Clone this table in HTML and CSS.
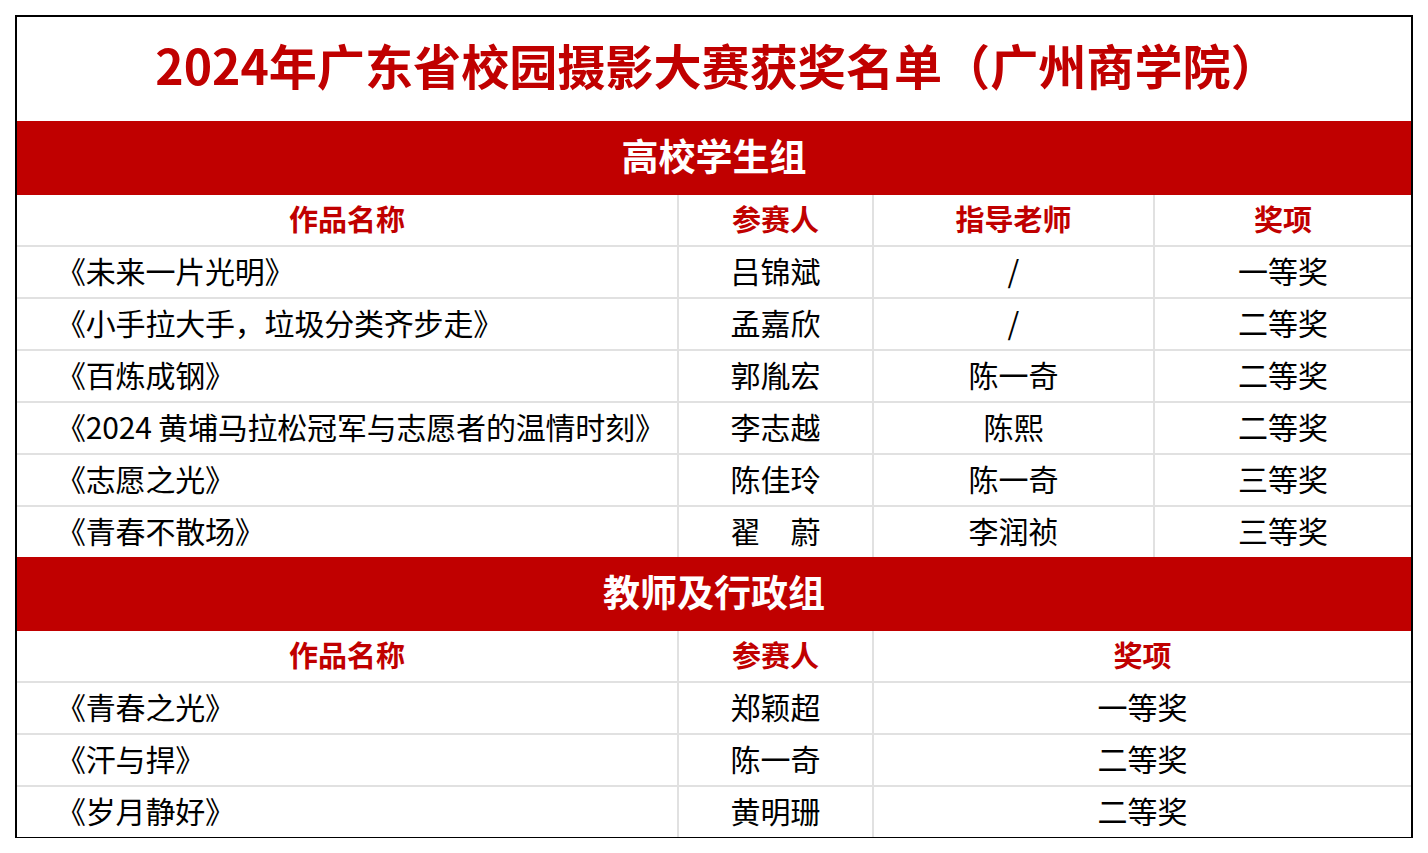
FILE: index.html
```html
<!DOCTYPE html>
<html lang="zh-CN">
<head>
<meta charset="utf-8">
<title>2024年广东省校园摄影大赛获奖名单（广州商学院）</title>
<link rel="stylesheet" href="styles.css">
</head>
<body>
<div class="sheet">
  <div class="title">2024年广东省校园摄影大赛获奖名单（广州商学院）</div>

  <div class="band">高校学生组</div>
  <div class="group">
    <div class="row four head">
      <div class="cell">作品名称</div>
      <div class="cell">参赛人</div>
      <div class="cell">指导老师</div>
      <div class="cell">奖项</div>
    </div>
    <div class="row four">
      <div class="cell work">《未来一片光明》</div>
      <div class="cell">吕锦斌</div>
      <div class="cell">/</div>
      <div class="cell">一等奖</div>
    </div>
    <div class="row four">
      <div class="cell work">《小手拉大手，垃圾分类齐步走》</div>
      <div class="cell">孟嘉欣</div>
      <div class="cell">/</div>
      <div class="cell">二等奖</div>
    </div>
    <div class="row four">
      <div class="cell work">《百炼成钢》</div>
      <div class="cell">郭胤宏</div>
      <div class="cell">陈一奇</div>
      <div class="cell">二等奖</div>
    </div>
    <div class="row four">
      <div class="cell work">《2024 黄埔马拉松冠军与志愿者的温情时刻》</div>
      <div class="cell">李志越</div>
      <div class="cell">陈熙</div>
      <div class="cell">二等奖</div>
    </div>
    <div class="row four">
      <div class="cell work">《志愿之光》</div>
      <div class="cell">陈佳玲</div>
      <div class="cell">陈一奇</div>
      <div class="cell">三等奖</div>
    </div>
    <div class="row four">
      <div class="cell work">《青春不散场》</div>
      <div class="cell">翟　蔚</div>
      <div class="cell">李润祯</div>
      <div class="cell">三等奖</div>
    </div>
  </div>

  <div class="band">教师及行政组</div>
  <div class="group">
    <div class="row three head">
      <div class="cell">作品名称</div>
      <div class="cell">参赛人</div>
      <div class="cell">奖项</div>
    </div>
    <div class="row three">
      <div class="cell work">《青春之光》</div>
      <div class="cell">郑颖超</div>
      <div class="cell">一等奖</div>
    </div>
    <div class="row three">
      <div class="cell work">《汗与捍》</div>
      <div class="cell">陈一奇</div>
      <div class="cell">二等奖</div>
    </div>
    <div class="row three">
      <div class="cell work">《岁月静好》</div>
      <div class="cell">黄明珊</div>
      <div class="cell">二等奖</div>
    </div>
  </div>
</div>
</body>
</html>
```

FILE: styles.css
```css
* { box-sizing: border-box; }

html, body {
  margin: 0;
  background: #ffffff;
}

body {
  padding: 15px 0 0 15px;
  font-family: "Noto Sans CJK SC", "Noto Sans", sans-serif;
  color: #000000;
}

.sheet {
  width: 1398px;
  border: 2px solid #000000;
  border-bottom-width: 1px;
  background: #ffffff;
}

.title {
  height: 104px;
  display: flex;
  align-items: center;
  justify-content: center;
  color: #c00000;
  font-size: 48.1px;
  font-weight: 700;
  line-height: 1;
  padding-bottom: 10px;
  padding-left: 6px;
}

.band {
  height: 74px;
  background: #c00000;
  color: #ffffff;
  font-size: 37px;
  font-weight: 700;
  display: flex;
  align-items: center;
  justify-content: center;
  line-height: 1;
  padding-bottom: 5px;
}

.row {
  display: grid;
  height: 52px;
  border-bottom: 2px solid #e1e1e1;
}

.row:last-child {
  height: 50px;
  border-bottom: none;
}

.row.four { grid-template-columns: 660px 195px 281px 258px; }
.row.three { grid-template-columns: 660px 195px 539px; }

.cell {
  display: flex;
  align-items: center;
  justify-content: center;
  font-size: 30px;
  line-height: 1;
  white-space: nowrap;
  padding-bottom: 4px;
}

.cell + .cell {
  border-left: 2px solid #e1e1e1;
}

.cell.work {
  justify-content: flex-start;
  padding-left: 39px;
  letter-spacing: -0.2px;
}

.head .cell {
  color: #c00000;
  font-weight: 700;
  font-size: 29px;
}
```
